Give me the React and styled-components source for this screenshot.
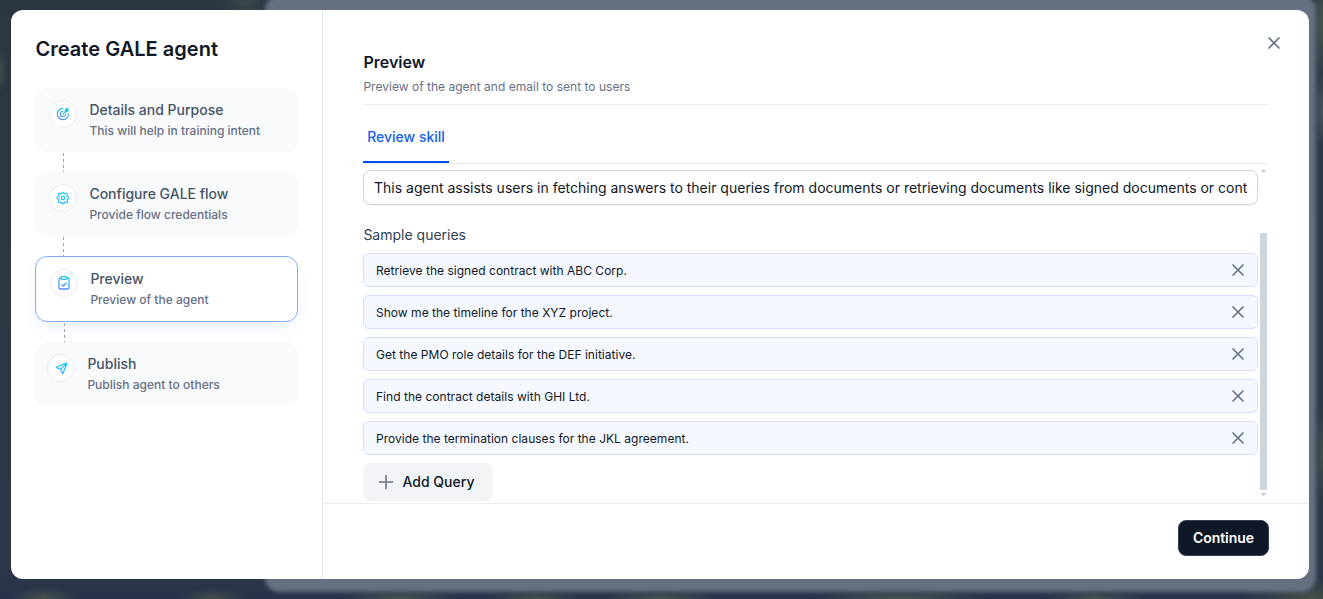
import React from "react";
import styled, { createGlobalStyle, css } from "styled-components";

const GlobalStyle = createGlobalStyle`
  *, *::before, *::after { box-sizing: border-box; }
  body { margin: 0; font-family: Inter, "Liberation Sans", sans-serif; color: #101828; }
  button, input { font-family: inherit; }
`;

const Screen = styled.div`
  position: relative;
  height: 599px;
  padding: 10px 14px 20px 11px;
  overflow: hidden;
  background:
    radial-gradient(ellipse 34px 11px at 44px 598px, #465149, transparent),
    radial-gradient(ellipse 34px 10px at 213px 598px, #424d49, transparent),
    radial-gradient(ellipse 24px 16px at 246px 2px, #3c4848, transparent),
    radial-gradient(ellipse 8px 24px at 0px 70px, #3e4c45, transparent),
    radial-gradient(ellipse 60px 10px at 400px 599px, #48534f, transparent),
    radial-gradient(ellipse 50px 9px at 535px 599px, #445049, transparent),
    radial-gradient(ellipse 60px 9px at 660px 599px, #48534f, transparent),
    radial-gradient(ellipse 90px 10px at 900px 599px, #465350, transparent),
    radial-gradient(ellipse 50px 9px at 1095px 599px, #465350, transparent),
    radial-gradient(ellipse 70px 22px at 1310px 599px, #465148, transparent),
    radial-gradient(ellipse 14px 60px at 1323px 25px, #48544f, transparent),
    radial-gradient(ellipse 10px 40px at 1323px 110px, #4a5560, transparent),
    radial-gradient(ellipse 10px 50px at 1323px 455px, #445049, transparent),
    linear-gradient(#2b3643, #2a3847 94%, #29324a);
`;

const Backdrop = styled.div`
  position: absolute;
  left: 265px;
  right: 7px;
  top: -4px;
  bottom: 7px;
  border-radius: 14px;
  background: #667080;
  filter: blur(2px);
`;

const Modal = styled.div`
  position: relative;
  display: flex;
  height: 569px;
  border-radius: 12px;
  background: #fff;
  overflow: hidden;
`;

const Sidebar = styled.aside`
  width: 312px;
  flex: none;
  padding: 24px 24px 0;
  border-right: 1px solid #e4e7ec;
`;

const Title = styled.h1`
  margin: 0 0 24px;
  padding-left: 0.5px;
  font-size: 20px;
  line-height: 30px;
  font-weight: 600;
  letter-spacing: 0.03px;
  white-space: nowrap;
`;

const Step = styled.div`
  display: flex;
  gap: 12.4px;
  width: 263px;
  padding: 12px ${(p) => p.$inset || 14}px;
  border-radius: 12px;
  background: #f9fafb;
  ${(p) =>
    p.$active &&
    css`
      background: #fff;
      border: 1px solid #84adff;
      box-shadow: 0 8px 16px -4px rgba(21, 94, 239, 0.1);
    `}
`;

const StepIcon = styled.span`
  display: flex;
  align-items: center;
  justify-content: center;
  width: 28px;
  height: 28px;
  flex: none;
  border: 1px solid #eaecf0;
  border-radius: 50%;
  background: #fff;
`;

const StepTitle = styled.div`
  font-size: 14px;
  line-height: 20px;
  font-weight: 500;
  color: #475467;
`;

const StepNote = styled.div`
  margin-top: 2px;
  font-size: 12px;
  line-height: 18px;
  font-weight: 500;
  letter-spacing: 0.01px;
  color: #667085;
`;

const Connector = styled.div`
  width: 1px;
  height: 20px;
  margin-left: ${(p) => p.$offset}px;
  background: repeating-linear-gradient(transparent 0 1px, #98a2b3 1px 4px, transparent 4px 6px);
`;

const Main = styled.main`
  display: flex;
  flex: 1;
  min-width: 0;
  flex-direction: column;
`;

const Header = styled.header`
  display: flex;
  justify-content: space-between;
  height: 95px;
  margin: 0 40px;
  padding-top: 42px;
  border-bottom: 1px solid #eaecf0;
`;

const Heading = styled.h2`
  margin: 0;
  font-size: 16px;
  line-height: 20px;
  font-weight: 600;
  padding-left: 0.4px;
`;

const Subheading = styled.p`
  margin: 5px 0 0;
  padding-left: 0.4px;
  font-size: 12px;
  line-height: 20px;
  letter-spacing: 0.02px;
  color: #667085;
`;

const IconButton = styled.button`
  display: flex;
  padding: 0;
  border: 0;
  background: none;
  color: #667085;
`;

const CloseButton = styled(IconButton)`
  height: 20px;
  margin: -19px -15px 0 0;
`;

const Tabs = styled.nav`
  height: 59px;
  margin: 0 40px;
  border-bottom: 1px solid #eaecf0;
`;

const Tab = styled.button`
  width: 86px;
  height: 58px;
  padding: 7px 0 0;
  border: 0;
  border-bottom: 2px solid #004eeb;
  background: none;
  color: #155eef;
  font-size: 14px;
  font-weight: 500;
  white-space: nowrap;
`;

const ScrollArea = styled.section`
  display: flex;
  height: 329px;
  margin: 0 40px;
`;

const Form = styled.div`
  width: 895px;
  padding-top: 6px;
`;

const Purpose = styled.input`
  display: block;
  width: 100%;
  height: 35px;
  padding: 0 10px;
  border: 1px solid #d0d5dd;
  border-radius: 8px;
  box-shadow: 0 1px 2px rgba(16, 24, 40, 0.05);
  color: #101828;
  font-size: 14px;
  outline: 0;
`;

const Label = styled.div`
  margin: 20px 0 8px;
  padding-left: 0.4px;
  font-size: 14px;
  line-height: 20px;
  color: #344054;
`;

const QueryList = styled.div`
  display: flex;
  flex-direction: column;
  gap: 8px;
`;

const Query = styled.div`
  display: flex;
  align-items: center;
  justify-content: space-between;
  height: 34px;
  padding: 0 9px 0 12px;
  border: 1px solid #d1e0ff;
  border-radius: 6px;
  background: #f5f8ff;
  font-size: 12px;
  letter-spacing: 0.025px;
`;

const AddButton = styled.button`
  display: flex;
  align-items: center;
  gap: 6.5px;
  width: 130px;
  height: 38px;
  margin-top: 8px;
  padding: 0 0 0 13px;
  border: 0;
  border-radius: 8px;
  background: #f2f4f7;
  color: #101828;
  font-size: 14px;
  font-weight: 500;
`;

const AddLabel = styled.span`
  padding-bottom: 2px;
`;

const Scrollbar = styled.div`
  display: flex;
  flex-direction: column;
  align-items: center;
  width: 7px;
  margin-left: 2px;
  padding-top: 5px;
`;

const Arrow = styled.span`
  flex: none;
  width: 6px;
  height: 3px;
  background: #c3ccd8;
  clip-path: ${(p) => (p.$down ? "polygon(0 0, 100% 0, 50% 100%)" : "polygon(50% 0, 100% 100%, 0 100%)")};
`;

const Thumb = styled.span`
  width: 7px;
  height: 257px;
  margin: 61px 0 3px;
  flex: none;
  background: #cdd5df;
`;

const Footer = styled.footer`
  display: flex;
  flex: 1;
  align-items: flex-start;
  justify-content: flex-end;
  margin-top: 10px;
  padding: 16px 40px 0;
  border-top: 1px solid #eaecf0;
`;

const Continue = styled.button`
  width: 91px;
  height: 36px;
  padding: 0 0 2px;
  border: 1px solid #344054;
  border-radius: 8px;
  background: #101828;
  color: #fff;
  font-size: 14px;
  font-weight: 600;
  letter-spacing: -0.08px;
`;

function Cross({ size = 20 }) {
  return (
    <svg width={size} height={size} viewBox="0 0 20 20" fill="none" stroke="currentColor" strokeWidth="1.65" strokeLinecap="round">
      <path d="m5 5 10 10M15 5 5 15" />
    </svg>
  );
}

const glyphs = {
  target: (
    <>
      <path d="M8 1.5A6.5 6.5 0 1 0 14.5 8M8 4.9a3.1 3.1 0 1 0 3.1 3.1M8 8l3-3" />
      <path d="M10.7 5.3V3.4l2-2 .5 1.4 1.4.5-2 2z" fill="#22ccee" />
    </>
  ),
  gear: (
    <>
      <circle cx="8" cy="8" r="1.9" />
      <path d="M6.8 2.4a1.25 1.25 0 0 1 2.4 0l.3.7.8.2.8-.4a1.25 1.25 0 0 1 1.8 1.8l-.4.8.2.8.8.4a1.25 1.25 0 0 1 0 2.5l-.8.4-.2.8.4.8a1.25 1.25 0 0 1-1.8 1.8l-.8-.4-.8.3-.3.8a1.25 1.25 0 0 1-2.4 0l-.3-.8-.8-.3-.8.4a1.25 1.25 0 0 1-1.8-1.8l.4-.8-.2-.8-.8-.4a1.25 1.25 0 0 1 0-2.5l.8-.4.2-.8-.4-.8a1.25 1.25 0 0 1 1.8-1.8l.8.4.8-.2z" />
    </>
  ),
  clipboard: (
    <>
      <path d="M5.3 3H4.2C3.4 3 3 3.5 3 4.2v8.6c0 .8.5 1.2 1.2 1.2h7.6c.8 0 1.2-.5 1.2-1.2V4.2c0-.8-.5-1.2-1.2-1.2h-1.1" />
      <rect x="5.3" y="1.6" width="5.4" height="2.7" rx=".8" />
      <path d="m6 9.7 1.4 1.3 2.8-2.8" />
    </>
  ),
  send: <path d="m7 9 6.5-6.5M7.2 9.1l1.7 4c.2.5.5.5.7 0l4.2-10.4c.2-.4-.1-.7-.5-.5L2.9 6.4c-.5.2-.5.6 0 .7z" />,
};

const glyphSizes = { target: 14, gear: 14, clipboard: 16, send: 15 };

function Glyph({ name }) {
  const size = glyphSizes[name];
  return (
    <svg width={size} height={size} viewBox="0 0 16 16" fill="none" stroke={`url(#tint-${name})`} strokeWidth="1.3" strokeLinecap="round" strokeLinejoin="round">
      <defs>
        <linearGradient id={`tint-${name}`} gradientUnits="userSpaceOnUse" x1="11" y1="2" x2="5" y2="15">
          <stop stopColor="#22ccee" />
          <stop offset="1" stopColor={name === "target" || name === "clipboard" ? "#5b7cfa" : "#25b5f5"} />
        </linearGradient>
      </defs>
      {glyphs[name]}
    </svg>
  );
}

const steps = [
  { icon: "target", title: "Details and Purpose", note: "This will help in training intent" },
  { icon: "gear", title: "Configure GALE flow", note: "Provide flow credentials" },
  { icon: "clipboard", title: "Preview", note: "Preview of the agent", active: true },
  { icon: "send", title: "Publish", note: "Publish agent to others", inset: 12 },
];

const queries = [
  "Retrieve the signed contract with ABC Corp.",
  "Show me the timeline for the XYZ project.",
  "Get the PMO role details for the DEF initiative.",
  "Find the contract details with GHI Ltd.",
  "Provide the termination clauses for the JKL agreement.",
];

export default function App() {
  return (
    <>
      <GlobalStyle />
      <Screen>
        <Backdrop />
        <Modal>
          <Sidebar>
            <Title>Create GALE agent</Title>
            {steps.map((step, i) => (
              <React.Fragment key={step.title}>
                {i > 0 && <Connector $offset={i === 3 ? 29 : 28} />}
                <Step $active={step.active} $inset={step.inset}>
                  <StepIcon><Glyph name={step.icon} /></StepIcon>
                  <div>
                    <StepTitle>{step.title}</StepTitle>
                    <StepNote>{step.note}</StepNote>
                  </div>
                </Step>
              </React.Fragment>
            ))}
          </Sidebar>
          <Main>
            <Header>
              <div>
                <Heading>Preview</Heading>
                <Subheading>Preview of the agent and email to sent to users</Subheading>
              </div>
              <CloseButton aria-label="Close"><Cross /></CloseButton>
            </Header>
            <Tabs><Tab>Review skill</Tab></Tabs>
            <ScrollArea>
              <Form>
                <Purpose
                  readOnly
                  value="This agent assists users in fetching answers to their queries from documents or retrieving documents like signed documents or cont"
                />
                <Label>Sample queries</Label>
                <QueryList>
                  {queries.map((text) => (
                    <Query key={text}>
                      {text}
                      <IconButton aria-label="Remove"><Cross /></IconButton>
                    </Query>
                  ))}
                </QueryList>
                <AddButton>
                  <svg width="20" height="20" viewBox="0 0 20 20" fill="none" stroke="#667085" strokeWidth="1.5" strokeLinecap="round">
                    <path d="M10 3.5v13M3.5 10h13" />
                  </svg>
                  <AddLabel>Add Query</AddLabel>
                </AddButton>
              </Form>
              <Scrollbar><Arrow /><Thumb /><Arrow $down /></Scrollbar>
            </ScrollArea>
            <Footer><Continue>Continue</Continue></Footer>
          </Main>
        </Modal>
      </Screen>
    </>
  );
}
